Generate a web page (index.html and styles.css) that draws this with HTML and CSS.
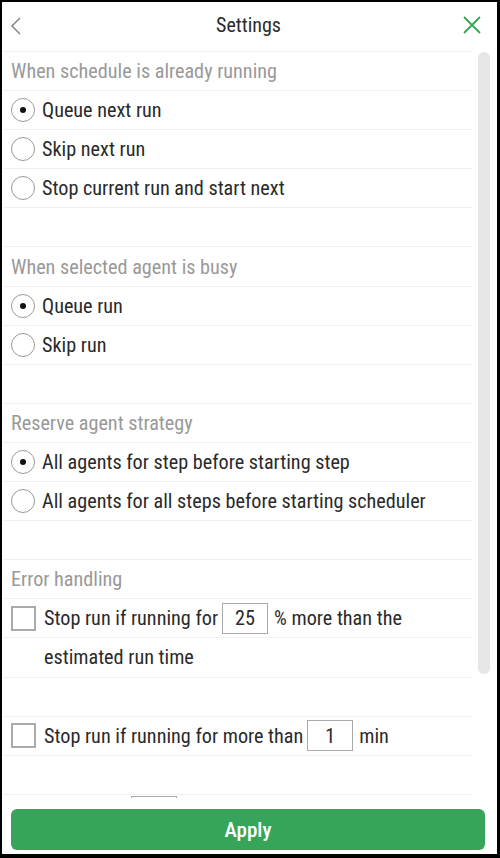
FILE: index.html
```html
<!DOCTYPE html>
<html>
<head>
<meta charset="utf-8">
<link rel="stylesheet" href="styles.css">
</head>
<body>
<div class="frame">
  <header class="header">
    <svg class="back" width="12" height="18" viewBox="0 0 12 18"><path d="M10 1 L2 9 L10 17" fill="none" stroke="#8a8a8a" stroke-width="1.6"/></svg>
    <div class="title">Settings</div>
    <svg class="close" width="18" height="18" viewBox="0 0 18 18"><path d="M1 1 L17 17 M17 1 L1 17" fill="none" stroke="#34a853" stroke-width="1.8"/></svg>
  </header>
  <div class="body">
    <div class="list">
      <div class="row heading">When schedule is already running</div>
      <div class="row"><span class="radio on"></span><span class="label">Queue next run</span></div>
      <div class="row"><span class="radio"></span><span class="label">Skip next run</span></div>
      <div class="row"><span class="radio"></span><span class="label">Stop current run and start next</span></div>
      <div class="row"></div>
      <div class="row heading">When selected agent is busy</div>
      <div class="row"><span class="radio on"></span><span class="label">Queue run</span></div>
      <div class="row"><span class="radio"></span><span class="label">Skip run</span></div>
      <div class="row"></div>
      <div class="row heading">Reserve agent strategy</div>
      <div class="row"><span class="radio on"></span><span class="label">All agents for step before starting step</span></div>
      <div class="row"><span class="radio"></span><span class="label">All agents for all steps before starting scheduler</span></div>
      <div class="row"></div>
      <div class="row heading">Error handling</div>
      <div class="row"><span class="check"></span><span class="label cl">Stop run if running for</span><span class="box">25</span><span class="label">% more than the</span></div>
      <div class="row"><span class="label cont">estimated run time</span></div>
      <div class="row"></div>
      <div class="row"><span class="check"></span><span class="label cl">Stop run if running for more than</span><span class="box">1</span><span class="label">min</span></div>
      <div class="row"></div>
      <div class="row top"><span class="spacer"></span><span class="box"></span></div>
    </div>
    <div class="gutter"><div class="thumb"></div></div>
  </div>
  <footer class="footer">
    <button class="apply">Apply</button>
  </footer>
</div>
</body>
</html>
```

FILE: styles.css
```css
* { box-sizing: border-box; }
html, body { margin: 0; padding: 0; background: #fff; }
body {
  font-family: "Roboto Condensed", Roboto, "Liberation Sans", sans-serif;
  font-stretch: condensed;
  color: #2a2a2a;
}
.frame {
  width: 500px;
  height: 858px;
  border-style: solid;
  border-color: #000;
  border-width: 2px 3px 4px 2px;
  display: flex;
  flex-direction: column;
  overflow: hidden;
  background: #fff;
}
.header {
  height: 49px;
  flex: none;
  display: flex;
  align-items: center;
  padding: 0 16px 0 8px;
}
.back { flex: none; margin-top: -1px; }
.title {
  flex: 1;
  text-align: center;
  font-size: 20px;
  color: #2a2a2a;
  padding-left: 12px;
  margin-top: -3px;
}
.close { flex: none; margin-top: -4px; }
.body {
  flex: 1;
  display: flex;
  min-height: 0;
  overflow: hidden;
}
.list {
  width: 470px;
  flex: none;
  padding-left: 1px;
}
.row {
  height: 39.1px;
  border-top: 1px solid #f0f0f0;
  display: flex;
  align-items: center;
  font-size: 20.2px;
  padding-left: 8px;
  white-space: nowrap;
}
.heading { color: #999; padding-left: 8px; }
.radio {
  width: 24px;
  height: 24px;
  border: 1.5px solid #999;
  border-radius: 50%;
  flex: none;
  display: flex;
  align-items: center;
  justify-content: center;
  margin-right: 7px;
}
.radio.on::after {
  content: "";
  width: 6px;
  height: 6px;
  border-radius: 50%;
  background: #111;
}
.check {
  width: 25px;
  height: 25px;
  border: 2px solid #aaa;
  flex: none;
  margin-right: 8px;
}
.label.cl { margin-right: 4px; }
.label.cont { padding-left: 33px; }
.box {
  width: 46px;
  height: 31px;
  border: 1.5px solid #aaa;
  display: inline-flex;
  align-items: center;
  justify-content: center;
  margin-right: 6px;
  font-size: 20.2px;
  flex: none;
}
.row.top { align-items: flex-start; }
.spacer { width: 120px; flex: none; }
.row.top .box { margin-top: 1px; }
.gutter {
  flex: 1;
  padding: 1px 6px 0 6px;
}
.thumb {
  width: 12px;
  height: 622px;
  background: #e6e6e6;
  border-radius: 6px;
}
.footer {
  height: 56px;
  flex: none;
  padding: 11px 12px 4px 9px;
  background: #fff;
}
.apply {
  width: 100%;
  height: 41px;
  border: none;
  border-radius: 6px;
  background: #37a559;
  color: #fff;
  font-family: inherit;
  font-stretch: condensed;
  font-size: 21px;
  font-weight: 500;
  padding: 0;
}
```
